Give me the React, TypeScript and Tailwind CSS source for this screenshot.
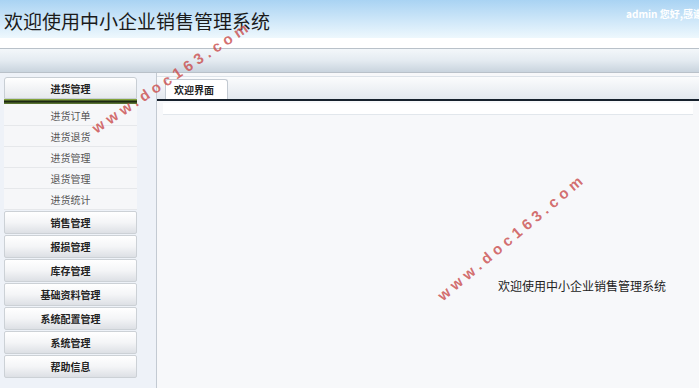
import React from "react";

const subItems = ["进货订单", "进货退货", "进货管理", "退货管理", "进货统计"];
const groups = ["销售管理", "报损管理", "库存管理", "基础资料管理", "系统配置管理", "系统管理", "帮助信息"];

function Watermark({ className }: { className: string }) {
  return (
    <div
      className={
        "pointer-events-none absolute w-[200px] text-center text-[15px] font-bold tracking-[4.5px] text-[#c94a4a]/80 " +
        className
      }
      style={{ fontFamily: '"Liberation Sans", Arial, sans-serif' }}
    >
      www.doc163.com
    </div>
  );
}

export default function App() {
  return (
    <div
      className="relative h-[388px] w-[699px] overflow-hidden bg-[#eef2f8] text-[#222]"
      style={{ fontFamily: '"Noto Sans CJK SC", "Noto Sans", sans-serif' }}
    >
      {/* header */}
      <div className="flex h-[38px] items-start justify-between bg-gradient-to-b from-[#a9d3f3] to-[#eef8fd]">
        <h1 className="mt-[7px] pl-[4px] text-[19px] leading-[28px] text-[#1a1a1a]">欢迎使用中小企业销售管理系统</h1>
        <span className="mr-[-14px] mt-[6px] whitespace-nowrap text-[10px] font-bold text-white">admin 您好,感谢登</span>
      </div>
      <div className="h-[10px] bg-white" />
      <div className="h-[25px] border-y border-y-[#b9c1c9] bg-gradient-to-b from-[#f3f7fa] via-[#e4ebf1] to-[#c9d4de]" />

      <div className="flex h-[315px]">
        {/* sidebar */}
        <div className="flex w-[156px] flex-col pl-[4px] pt-[4px]">
          <div className="w-[133px]">
            <div className="flex h-[22px] items-center justify-center rounded-t-[3px] border border-[#c8ced4] bg-gradient-to-b from-white to-[#e6e9ed] text-[10px] font-bold">
              进货管理
            </div>
            <div className="h-[5px] bg-gradient-to-b from-[#9fc446] via-[#1c2812] to-[#6b8a3a]" />
            <div className="h-[1px] bg-[#f6f7f9]" />
            {subItems.map((s) => (
              <div
                key={s}
                className="flex h-[21px] items-center justify-center border-b border-[#e6e8eb] bg-[#f6f7f9] text-[10px] text-[#555]"
              >
                {s}
              </div>
            ))}
            {groups.map((g) => (
              <div
                key={g}
                className="mt-[1px] flex h-[23px] items-center justify-center rounded-[2px] border border-[#ccd1d6] bg-gradient-to-b from-white via-[#f4f5f7] to-[#dde0e5] text-[10px] font-bold text-[#222]"
              >
                {g}
              </div>
            ))}
          </div>
        </div>

        {/* content */}
        <div className="flex flex-1 flex-col border-l border-[#c3cad2] bg-[#f7f8fa]">
          <div className="mt-[3px] flex h-[23px] items-end border-t border-[#dde3e9] bg-gradient-to-b from-[#fbfcfd] to-[#e3e8ee] pl-[8px]">
            <div className="flex h-[20px] w-[63px] items-center rounded-t-[3px] border border-b-0 border-[#c3cad2] bg-white pl-[8px] text-[10px] font-bold">
              欢迎界面
            </div>
          </div>
          <div className="h-[2px] bg-[#17212c]" />
          <div className="mx-[6px] mt-[2px] h-[12px] border-b border-[#e2e7ec] bg-white" />
          <div className="flex flex-1 items-start pl-[341px] pt-[162px]">
            <span className="whitespace-nowrap text-[12px] text-[#222]">欢迎使用中小企业销售管理系统</span>
          </div>
        </div>
      </div>

      <Watermark className="left-[72px] top-[66px] -rotate-[34deg]" />
      <Watermark className="left-[412px] top-[226px] -rotate-[40deg]" />
    </div>
  );
}
